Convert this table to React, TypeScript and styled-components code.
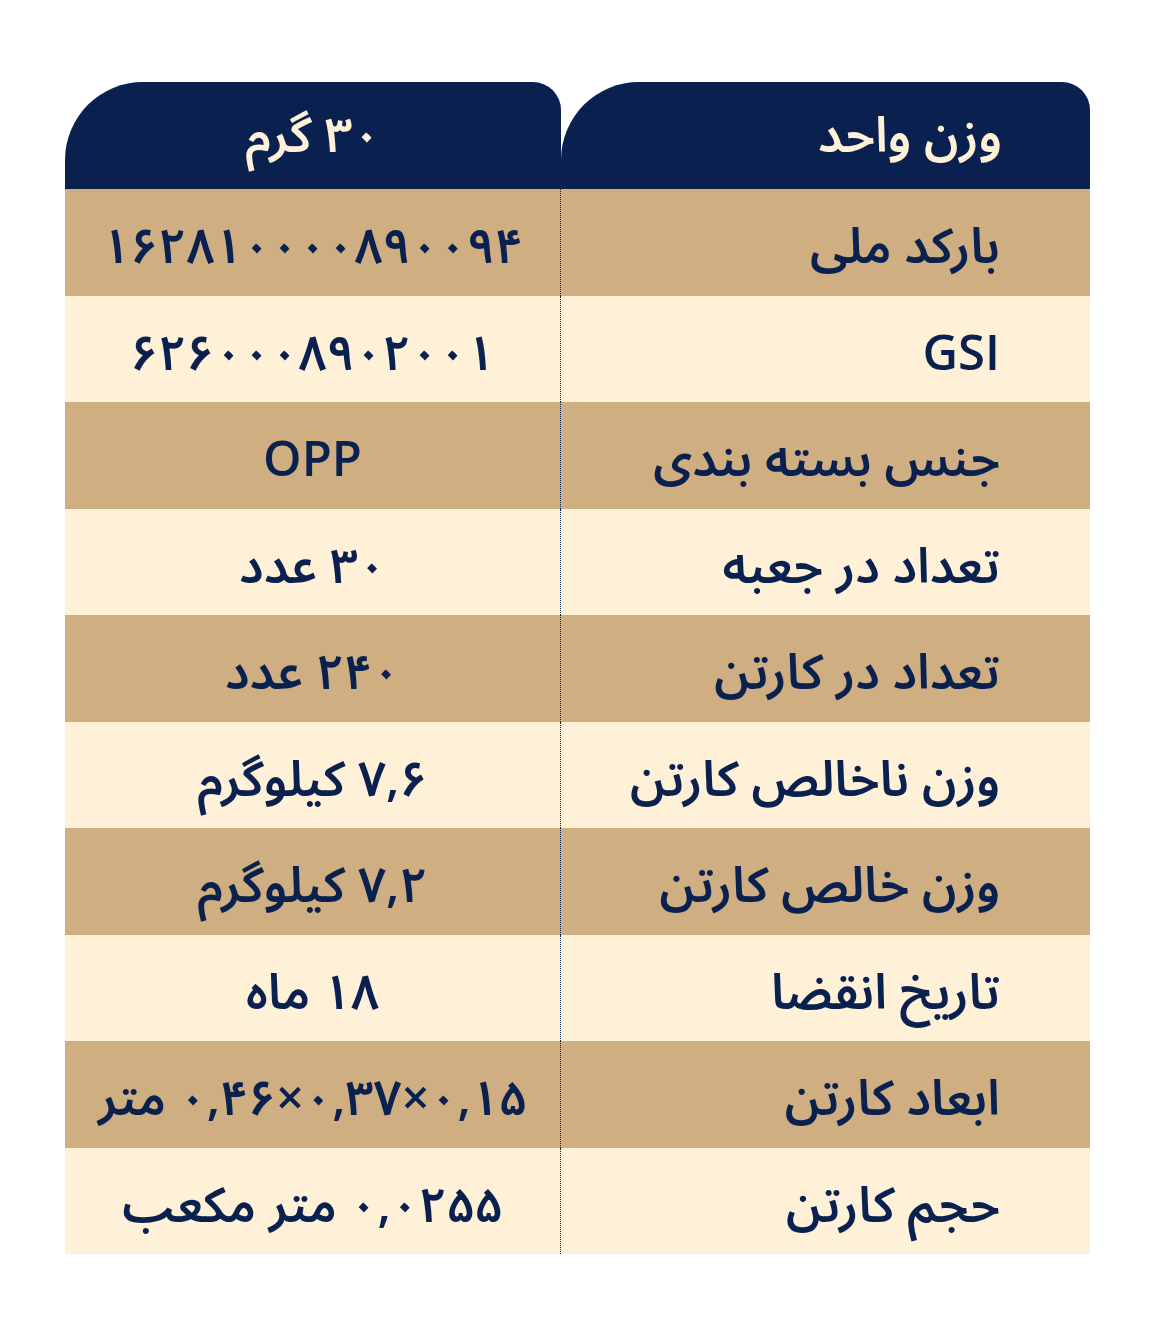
import React from "react";
import styled, { createGlobalStyle } from "styled-components";

const NAVY = "#0a2150";
const TAN = "#cfae81";
const CREAM = "#fff1d8";

const GlobalStyle = createGlobalStyle`
  html, body { margin: 0; padding: 0; background: #ffffff; }
  body {
    font-family: "Open Sans", "Noto Sans Arabic", "Vazirmatn", "DejaVu Sans", sans-serif;
  }
`;

const Page = styled.div`
  width: 1165px;
  height: 1317px;
  box-sizing: border-box;
  padding: 82px 75px 0 65px;
  background: #ffffff;
`;

const Table = styled.div`
  width: 1025px;
  display: flex;
  flex-direction: column;
  direction: rtl;
`;

const HeaderRow = styled.div`
  display: grid;
  grid-template-columns: 529px 496px;
  grid-template-rows: 107px;
  height: 107px;
`;

const HeaderCell = styled.div<{ $align: "start" | "center" }>`
  background: ${NAVY};
  color: ${CREAM};
  border-radius: 78px 28px 0 0;
  display: flex;
  align-items: center;
  justify-content: ${(p) => (p.$align === "start" ? "flex-start" : "center")};
  padding: ${(p) => (p.$align === "start" ? "0 88px 4px 0" : "0 0 4px 0")};
  font-size: 49px;
  font-weight: 600;
  line-height: 1.3;
  white-space: pre;
  min-height: 0;
`;

const Row = styled.div<{ $tone: "tan" | "cream" }>`
  display: grid;
  grid-template-columns: 529px 496px;
  grid-template-rows: 106.5px;
  height: 106.5px;
  background: ${(p) => (p.$tone === "tan" ? TAN : CREAM)};
  color: ${NAVY};
`;

const LabelCell = styled.div`
  display: flex;
  align-items: center;
  justify-content: flex-start;
  padding: 6px 90px 0 0;
  font-size: 49px;
  font-weight: 600;
  line-height: 1.3;
  min-height: 0;
`;

const ValueCell = styled.div`
  display: flex;
  align-items: center;
  justify-content: center;
  padding-top: 6px;
  border-right: 1px dotted ${NAVY};
  font-size: 49px;
  font-weight: 600;
  line-height: 1.3;
  white-space: pre;
  min-height: 0;
`;

const rows: [string, string][] = [
  ["بارکد ملی", "۱۶۲۸۱۰۰۰۰۸۹۰۰۹۴"],
  ["GSI", "۶۲۶۰۰۰۸۹۰۲۰۰۱"],
  ["جنس بسته بندی", "OPP"],
  ["تعداد در جعبه", "۳۰ عدد"],
  ["تعداد در کارتن", "۲۴۰ عدد"],
  ["وزن ناخالص کارتن", "۷,۶ کیلوگرم"],
  ["وزن خالص کارتن", "۷,۲ کیلوگرم"],
  ["تاریخ انقضا", "۱۸ ماه"],
  ["ابعاد کارتن", "۰,۱۵×۰,۳۷×۰,۴۶ متر"],
  ["حجم کارتن", "۰,۰۲۵۵ متر مکعب"],
];

export default function App() {
  return (
    <>
      <GlobalStyle />
      <Page>
        <Table>
          <HeaderRow>
            <HeaderCell $align="start">وزن واحد</HeaderCell>
            <HeaderCell $align="center">۳۰ گرم</HeaderCell>
          </HeaderRow>
          {rows.map(([label, value], i) => (
            <Row key={label} $tone={i % 2 === 0 ? "tan" : "cream"}>
              <LabelCell>{label}</LabelCell>
              <ValueCell>{value}</ValueCell>
            </Row>
          ))}
        </Table>
      </Page>
    </>
  );
}
